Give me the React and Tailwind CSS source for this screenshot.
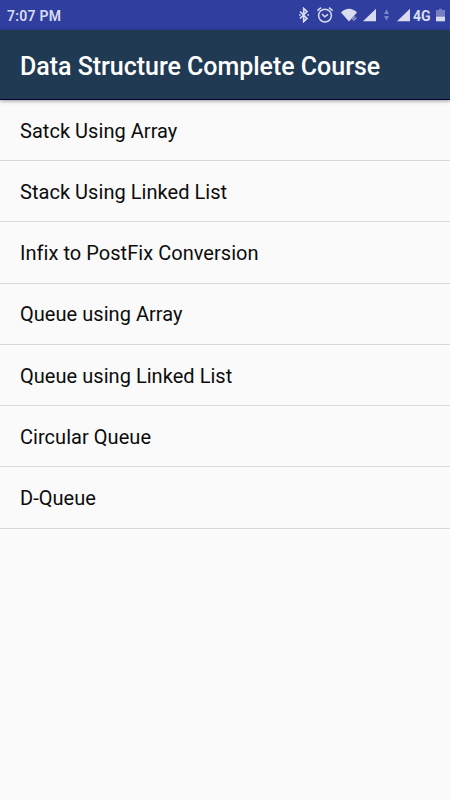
import React from 'react';

const topics = [
  'Satck Using Array',
  'Stack Using Linked List',
  'Infix to PostFix Conversion',
  'Queue using Array',
  'Queue using Linked List',
  'Circular Queue',
  'D-Queue',
];

function BluetoothIcon() {
  return (
    <svg width="10" height="16" viewBox="0 0 10 16" fill="none" stroke="currentColor" strokeWidth="1.7">
      <path d="M1 4.5l7 7-3.3 3V1.5L8 4.5l-7 7" />
      <path d="M0 7.2h1.6v1.6H0zM8.4 7.2H10v1.6H8.4z" fill="currentColor" stroke="none" />
    </svg>
  );
}

function AlarmIcon() {
  return (
    <svg width="18" height="18" viewBox="0 0 18 18" fill="none" stroke="currentColor" strokeWidth="1.5">
      <circle cx="9" cy="9.6" r="6.4" />
      <path d="M1.4 4.6L5 1.6M16.6 4.6L13 1.6M6 8l2.8 2.8L12 8.4" />
    </svg>
  );
}

function WifiIcon() {
  return (
    <svg width="17" height="14" viewBox="0 0 17 14" fill="currentColor">
      <path d="M0 4.4C4.8-.4 11.2-.4 16 4.4L8 13.6z" />
      <path d="M10 11.4l3.6-3.6h2.8v2.4l-3.2 3.2H10z" fill="#303f9f" />
      <path d="M11 11.4l3-3M12.4 12.6l3-3" fill="none" stroke="currentColor" strokeWidth="1.3" opacity=".7" />
    </svg>
  );
}

function SignalIcon() {
  return (
    <svg width="13" height="14" viewBox="0 0 13 14" fill="currentColor">
      <path d="M13 .7v12.6H0z" />
    </svg>
  );
}

function DataArrowsIcon() {
  return (
    <svg width="5" height="14" viewBox="0 0 5 14" fill="currentColor" opacity=".45">
      <path d="M2.5 1.2L5 6H0zM2.5 12.8L5 8H0z" />
    </svg>
  );
}

function BatteryIcon() {
  return (
    <svg width="9" height="14" viewBox="0 0 9 14" fill="currentColor">
      <path d="M3 .7h3V2h3v6.5H0V2h3z" opacity=".42" />
      <path d="M0 8.5h9v4.8H0z" />
    </svg>
  );
}

function StatusBar() {
  return (
    <div className="flex h-[30px] items-center bg-[#303f9f] pr-[5px] pl-[7px] text-[#d9dcef]">
      <span className="mr-auto pt-px text-[14px] leading-[30px] font-semibold tracking-[0.25px]">7:07 PM</span>
      <BluetoothIcon />
      <span className="ml-[7px]"><AlarmIcon /></span>
      <span className="ml-[7px]"><WifiIcon /></span>
      <span className="ml-[5px]"><SignalIcon /></span>
      <span className="ml-2"><DataArrowsIcon /></span>
      <span className="ml-2"><SignalIcon /></span>
      <span className="ml-[3px] w-[18px] pt-px text-[14px] leading-[30px] font-bold">4G</span>
      <span className="ml-[5px]"><BatteryIcon /></span>
    </div>
  );
}

export default function App() {
  return (
    <div className="flex h-[800px] w-[450px] flex-col overflow-hidden bg-[#fafafa] font-['Roboto',sans-serif]">
      <StatusBar />
      <header className="relative flex h-[70px] items-center border-b border-[#000033] bg-[#213a53] px-5 pt-[5px] shadow-[0_1px_4px_rgba(0,0,0,0.4)]">
        <h1 className="text-[25px] leading-8 font-medium tracking-[-0.03px] whitespace-nowrap text-white">Data Structure Complete Course</h1>
      </header>
      <ul>
        {topics.map((topic) => (
          <li key={topic} className="flex h-[61.22px] items-center border-b border-[#d8d8d8] px-5 pt-[1.2px] text-[20px] tracking-[0.04px] text-[#0c0c0c]">
            {topic}
          </li>
        ))}
      </ul>
    </div>
  );
}
